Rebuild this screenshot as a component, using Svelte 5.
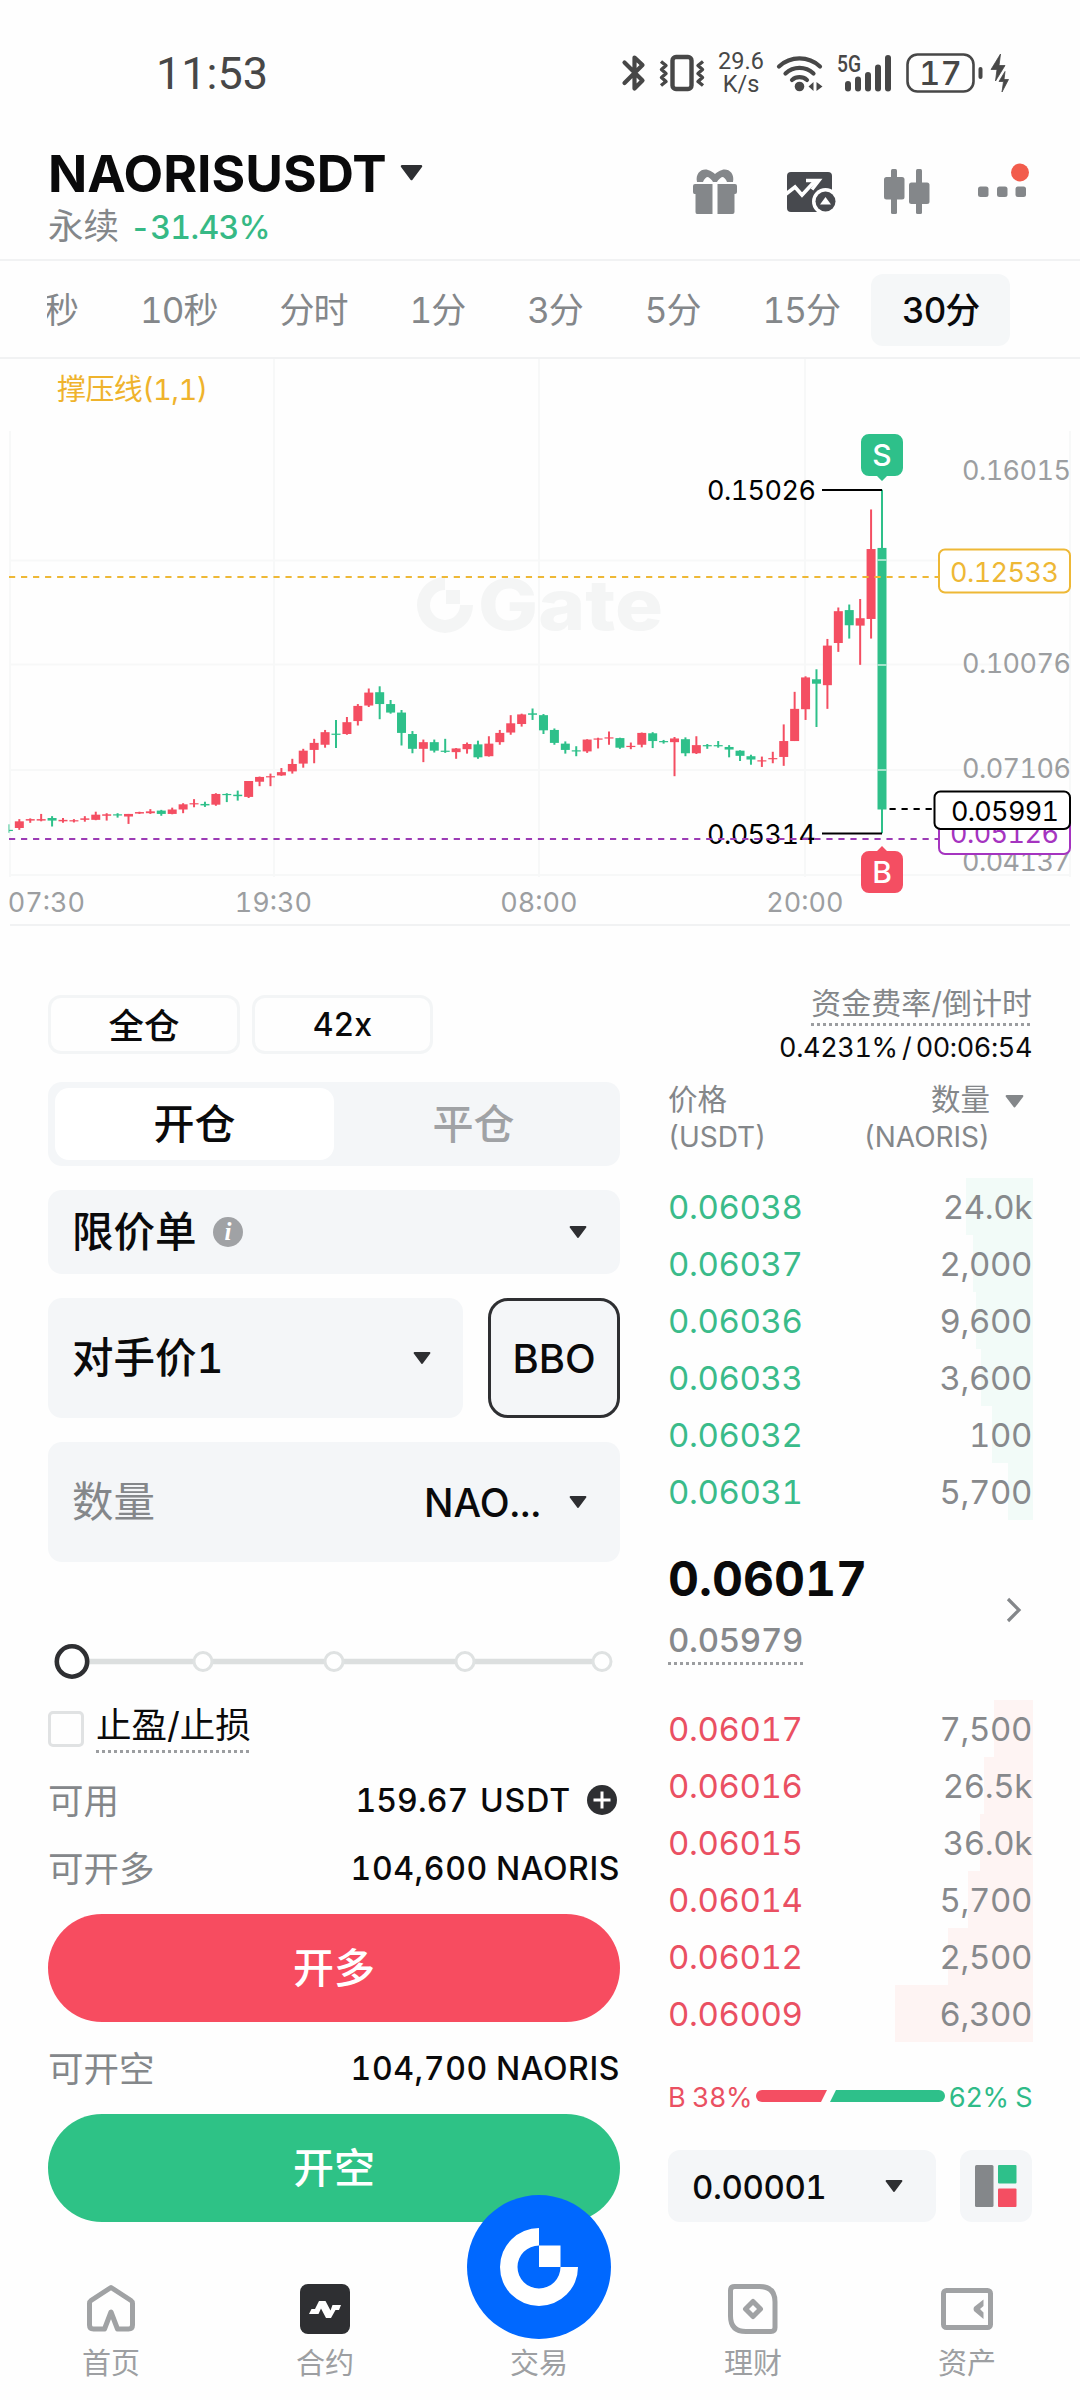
<script>
    const intervals = ['秒', '10秒', '分时', '1分', '3分', '5分', '15分', '30分'];
    let activeInterval = '30分';
    let side = 'open';
    let tpsl = false;

    // [direction, high, body top, body bottom, low] in chart units
    const candles = [
        ['g', 1282, 1297, 1300, 1305], ['r', 1268, 1274, 1292, 1297], ['r', 1266, 1268, 1272, 1278],
        ['r', 1254, 1268, 1272, 1274], ['g', 1260, 1265, 1272, 1288], ['r', 1265, 1270, 1274, 1278],
        ['r', 1268, 1271, 1273, 1277], ['r', 1260, 1266, 1270, 1275], ['r', 1248, 1256, 1270, 1271],
        ['r', 1252, 1255, 1259, 1272], ['g', 1252, 1255, 1257, 1264], ['r', 1254, 1254, 1261, 1281],
        ['r', 1248, 1249, 1253, 1254], ['r', 1241, 1247, 1252, 1254], ['g', 1243, 1245, 1254, 1259],
        ['r', 1237, 1242, 1254, 1255], ['r', 1225, 1228, 1242, 1252], ['r', 1214, 1225, 1227, 1236],
        ['g', 1221, 1227, 1231, 1235], ['r', 1198, 1200, 1229, 1232], ['g', 1198, 1200, 1203, 1222],
        ['g', 1191, 1202, 1206, 1218], ['r', 1165, 1165, 1208, 1211], ['r', 1153, 1154, 1167, 1179],
        ['r', 1145, 1152, 1154, 1179], ['r', 1130, 1141, 1150, 1151], ['r', 1105, 1119, 1139, 1145],
        ['r', 1078, 1083, 1118, 1129], ['r', 1051, 1062, 1081, 1117], ['r', 1027, 1033, 1067, 1075],
        ['g', 1000, 1037, 1040, 1076], ['r', 992, 1006, 1038, 1040], ['r', 957, 962, 1003, 1015],
        ['r', 915, 926, 961, 965], ['g', 909, 925, 957, 998], ['g', 946, 957, 980, 983],
        ['g', 973, 980, 1035, 1069], ['g', 1030, 1038, 1078, 1090], ['r', 1053, 1060, 1078, 1114],
        ['g', 1053, 1060, 1083, 1088], ['g', 1051, 1083, 1086, 1089], ['r', 1076, 1077, 1087, 1105],
        ['r', 1061, 1065, 1079, 1091], ['g', 1056, 1066, 1101, 1105], ['r', 1044, 1064, 1098, 1099],
        ['r', 1027, 1035, 1060, 1067], ['r', 987, 1009, 1034, 1040], ['r', 983, 985, 1011, 1018],
        ['g', 969, 982, 986, 1000], ['g', 984, 987, 1028, 1038], ['g', 1023, 1027, 1062, 1067],
        ['g', 1058, 1064, 1081, 1091], ['g', 1071, 1082, 1085, 1098], ['r', 1052, 1053, 1085, 1089],
        ['r', 1048, 1050, 1053, 1077], ['r', 1031, 1047, 1050, 1067], ['g', 1048, 1049, 1075, 1078],
        ['r', 1061, 1070, 1073, 1079], ['r', 1034, 1035, 1067, 1074], ['g', 1033, 1036, 1057, 1076],
        ['g', 1054, 1057, 1059, 1064], ['r', 1046, 1050, 1060, 1152], ['g', 1047, 1052, 1090, 1098],
        ['r', 1044, 1068, 1090, 1092], ['g', 1065, 1068, 1071, 1078], ['g', 1057, 1068, 1071, 1075],
        ['g', 1068, 1073, 1080, 1101], ['g', 1082, 1083, 1097, 1111], ['g', 1094, 1098, 1107, 1121],
        ['r', 1099, 1109, 1111, 1127], ['r', 1086, 1103, 1106, 1117], ['r', 1012, 1057, 1100, 1124],
        ['r', 924, 970, 1057, 1057], ['r', 882, 885, 971, 1000], ['g', 863, 890, 902, 1019],
        ['r', 781, 799, 906, 970], ['r', 696, 706, 792, 816], ['g', 688, 703, 744, 780],
        ['r', 673, 725, 745, 851], ['r', 431, 538, 727, 780], ['g', 378, 535, 1242, 1306],
    ];
    const colors = { r: '#f44e62', g: '#2ec08a' };
    const cx = (i) => 8.4 + i * 10.92;
    const cy = (v) => v / 2.703 - 9;

    const gridX = [10, 274, 539, 805, 1070];
    const gridY = [201.5, 305.5, 411, 516];
    const axis = [['0.16015', 121], ['0.10076', 314], ['0.07106', 419], ['0.04137', 512]];
    const times = [['07:30', 46.5], ['19:30', 273.5], ['08:00', 539], ['20:00', 805]];

    const asks = [
        { price: '0.06038', amount: '24.0k', depth: 67 },
        { price: '0.06037', amount: '2,000', depth: 60 },
        { price: '0.06036', amount: '9,600', depth: 57 },
        { price: '0.06033', amount: '3,600', depth: 52 },
        { price: '0.06032', amount: '100', depth: 41 },
        { price: '0.06031', amount: '5,700', depth: 25 },
    ];
    const bids = [
        { price: '0.06017', amount: '7,500', depth: 39 },
        { price: '0.06016', amount: '26.5k', depth: 49 },
        { price: '0.06015', amount: '36.0k', depth: 53 },
        { price: '0.06014', amount: '5,700', depth: 65 },
        { price: '0.06012', amount: '2,500', depth: 85 },
        { price: '0.06009', amount: '6,300', depth: 138 },
    ];
</script>

{#snippet caret(color = '#2e2f32', w = 18)}
    <svg class="caret" width={w} height={w * 0.66} viewBox="0 0 18 12">
        <path d="M1.500 1h15L9 11z" fill={color} stroke={color} stroke-width="2" stroke-linejoin="round" />
    </svg>
{/snippet}

{#snippet row(item, kind)}
    <div class="row {kind}">
        <span class="depth" style="width: {item.depth}px"></span>
        <span class="price">{item.price}</span>
        <span class="amount">{item.amount}</span>
    </div>
{/snippet}

<div class="screen">
    <div class="status">
        <span class="clock">11:53</span>
        <div class="status-icons">
            <svg width="24" height="38" viewBox="0 0 24 38" fill="none" stroke="#474747" stroke-width="4.200" stroke-linecap="round" stroke-linejoin="round">
                <path d="M2.500 8.500 20.500 26.500 12.500 34.500V3.500l8 7.500L2.500 29" />
            </svg>
            <svg class="vibrate" width="46" height="38" viewBox="0 0 46 38" fill="none" stroke="#474747" stroke-linejoin="round">
                <rect x="13.500" y="3" width="19" height="32" rx="3.500" stroke-width="4.400" />
                <path d="M2 7.500l5 4-4.500 4 4.500 4-4.500 4 4.500 4-5 4M44 7.500l-5 4 4.500 4-4.500 4 4.500 4-4.500 4 5 4" stroke-width="3.400" />
            </svg>
            <span class="speed"><span>29.6</span><span>K/s</span></span>
            <svg class="wifi" width="48" height="38" viewBox="0 0 48 38">
                <g fill="none" stroke="#474747" stroke-width="4.200" stroke-linecap="round">
                    <path d="M3 12.500a30 30 0 0 1 41 0" />
                    <path d="M9.500 19.500a20.500 20.500 0 0 1 28 0" />
                    <path d="M16 26a11.500 11.500 0 0 1 15 0" />
                </g>
                <circle cx="23.500" cy="32.500" r="4.800" fill="#474747" />
                <path d="M37.500 28v9l-5-4.500zM40.500 28v9l6-4.500z" fill="#474747" />
            </svg>
            <svg class="signal" width="56" height="38" viewBox="0 0 56 38" fill="#474747">
                <text x="0" y="18" class="net" textLength="24" lengthAdjust="spacingAndGlyphs">5G</text>
                <rect x="8" y="27" width="6" height="10.500" rx="3" />
                <rect x="18" y="22.500" width="6" height="15" rx="3" />
                <rect x="28" y="18" width="6" height="19.500" rx="3" />
                <rect x="38" y="10.500" width="6" height="27" rx="3" />
                <rect x="48" y="1" width="6" height="36.500" rx="3" />
            </svg>
            <svg class="battery" width="78" height="40" viewBox="0 0 78 40" fill="#474747">
                <rect x="1.500" y="1.500" width="66" height="37" rx="10" fill="none" stroke="#474747" stroke-width="2.600" />
                <rect x="72.500" y="14" width="4" height="12" rx="2" />
                <text x="34.500" y="32" text-anchor="middle" class="level">17</text>
            </svg>
            <svg class="bolt" width="18" height="40" viewBox="0 0 18 40" fill="#474747">
                <path d="M9.500 1 0 16.500h6L4.500 28 14 12.500H8zM14 18.500 8 28.500h4.500L11 39l6.500-12.500h-4.500z" stroke="#474747" stroke-width="0.800" />
            </svg>
        </div>
    </div>

    <header>
        <div class="pair">
            <div class="symbol"><h1>NAORISUSDT</h1>{@render caret('#2e2f32', 23)}</div>
            <div class="change"><span class="kind">永续</span><span class="pct">-31.43%</span></div>
        </div>
        <div class="tools">
            <svg width="46" height="46" viewBox="0 0 46 46">
                <path d="M5 13C3 4 10-1 16 1c3 1 5 2 7 4 2-2 4-3 7-4 6-2 13 3 11 12h-6c-1-3-3-5-5-5-2 1-4 3-5 5h-4c-1-2-3-4-5-5-2 0-4 2-5 5z" fill="#84878a" />
                <path d="M3 15h17.500v30H5q-1.500 0-1.500-2V25H2.500Q1 25 1 23v-6q0-2 2-2zM25.500 15H43q2 0 2 2v6q0 2-2 2h-.5v18q0 2-2 2h-15z" fill="#84878a" />
            </svg>
            <svg width="50" height="44" viewBox="0 0 50 44">
                <rect x="1" y="2" width="45" height="40" rx="4" fill="#47494e" />
                <path d="M0 24l9-7 7 8 13-14" fill="none" stroke="#fff" stroke-width="3.600" />
                <path d="M20 10.500h13l-7 9" fill="none" stroke="#fff" stroke-width="3.400" />
                <circle cx="39.500" cy="31.500" r="13.500" fill="#fff" />
                <circle cx="39.500" cy="31.500" r="10" fill="#47494e" />
                <path d="M39.500 27l5.500 7.500H34z" fill="#fff" />
            </svg>
            <svg width="46" height="46" viewBox="0 0 46 46" fill="#84878a">
                <rect x="7" y="0" width="6" height="45" rx="1.500" />
                <rect x="0" y="8" width="20.500" height="22.500" rx="2.500" />
                <rect x="32" y="0" width="6" height="45" rx="1.500" />
                <rect x="25" y="13.500" width="20.500" height="21.500" rx="2.500" />
            </svg>
            <svg width="52" height="46" viewBox="0 0 52 46">
                <rect x="0" y="17.500" width="10.500" height="10.500" rx="2.500" fill="#84878a" />
                <rect x="19" y="17.500" width="10.500" height="10.500" rx="2.500" fill="#84878a" />
                <rect x="37.500" y="17.500" width="10.500" height="10.500" rx="2.500" fill="#84878a" />
                <circle cx="42" cy="3.500" r="9" fill="#f25c4c" />
            </svg>
        </div>
    </header>

    <nav class="intervals">
        {#each intervals as label}
            <button class:active={label === activeInterval} on:click={() => (activeInterval = label)}>{label}</button>
        {/each}
    </nav>

    <svg class="chart" width="1080" height="567" viewBox="0 0 1080 567">
        {#each gridX as x, i}
            <line x1={x} x2={x} y1={i === 0 || i === 4 ? 72 : 0} y2="518" class="grid" />
        {/each}
        {#each gridY as y}
            <line x1="10" x2="1070" y1={y} y2={y} class="grid" />
        {/each}
        <line x1="10" x2="1070" y1="566" y2="566" stroke="#f1f2f3" stroke-width="2" />

        <g fill="#f4f5f5">
            <path d="M445 218a28 28 0 1 0 28 28h-13a15 15 0 1 1-15-15z" />
            <rect x="446" y="231" width="14" height="14" />
            <text x="478" y="271" class="watermark" textLength="185" lengthAdjust="spacingAndGlyphs">Gate</text>
        </g>
        <text x="57" y="41" class="indicator" textLength="151">撑压线(1,1)</text>

        {#each axis as [label, y]}
            <text x="962" {y} textLength="109" class="label muted">{label}</text>
        {/each}
        {#each times as [label, x]}
            <text {x} y="553" text-anchor="middle" class="label muted">{label}</text>
        {/each}
        <text x="707" y="140.500" textLength="109" class="label">0.15026</text>
        <text x="707" y="485" textLength="109" class="label">0.05314</text>

        {#each candles as [dir, high, top, bottom, low], i}
            <line x1={cx(i)} x2={cx(i)} y1={cy(high)} y2={cy(low)} stroke={colors[dir]} stroke-width="2" />
            <rect x={cx(i) - 4.5} y={cy(top)} width="9" height={Math.max(1.2, cy(bottom) - cy(top))} fill={colors[dir]} />
        {/each}
        <path d="M877.500 201h9M877.500 306h9M877.500 411h9" stroke="#c9eee0" stroke-width="1.500" />
        <rect x="0" y="464" width="8.500" height="12" fill="#fefefe" />

        <path d="M822 131h60M822 474.500h60" stroke="#000" stroke-width="2" />
        <line x1="9" x2="938" y1="218" y2="218" stroke="#eeb836" stroke-width="2" stroke-dasharray="6.200 5.820" />
        <line x1="9" x2="938" y1="480" y2="480" stroke="#9c3bb5" stroke-width="2" stroke-dasharray="6.200 5.820" />
        <line x1="889.500" x2="933" y1="450" y2="450" stroke="#000" stroke-width="2" stroke-dasharray="6.200 5.820" />

        <rect x="939" y="190.500" width="131" height="43" rx="6" fill="#fff" stroke="#eeb836" stroke-width="2" />
        <text x="950" y="222.500" textLength="109" class="label" fill="#eeb836">0.12533</text>
        <rect x="939" y="452" width="131" height="43" rx="6" fill="#fff" stroke="#a534c0" stroke-width="2" />
        <text x="950" y="484" textLength="109" class="label" fill="#a534c0">0.05126</text>
        <rect x="934.500" y="432.500" width="135.500" height="37.500" rx="6" fill="#fff" stroke="#000" stroke-width="2" />
        <text x="951" y="462" textLength="108" class="label">0.05991</text>

        <path d="M869 75h26a8 8 0 0 1 8 8v26a8 8 0 0 1-8 8h-8l-5 5-5-5h-8a8 8 0 0 1-8-8V83a8 8 0 0 1 8-8z" fill="#2ec08a" />
        <text x="882" y="106.500" text-anchor="middle" class="mark">S</text>
        <path d="M869 492h8l5-5 5 5h8a8 8 0 0 1 8 8v26a8 8 0 0 1-8 8h-26a8 8 0 0 1-8-8v-26a8 8 0 0 1 8-8z" fill="#f44e62" />
        <text x="882" y="523.500" text-anchor="middle" class="mark">B</text>
    </svg>

    <main>
        <section class="form">
            <div class="modes">
                <button class="margin">全仓</button>
                <button class="leverage">42x</button>
            </div>
            <div class="sides">
                <button class:on={side === 'open'} on:click={() => (side = 'open')}>开仓</button>
                <button class:on={side === 'close'} on:click={() => (side = 'close')}>平仓</button>
            </div>
            <div class="field order">
                <span class="name">限价单</span>
                <svg class="info" width="30" height="30" viewBox="0 0 30 30">
                    <circle cx="15" cy="15" r="15" fill="#a0a2a5" />
                    <text x="15" y="23" text-anchor="middle" class="i">i</text>
                </svg>
                {@render caret()}
            </div>
            <div class="price-row">
                <div class="field"><span class="name">对手价1</span>{@render caret()}</div>
                <button class="bbo">BBO</button>
            </div>
            <div class="field qty">
                <span class="name hint">数量</span>
                <span class="unit">NAO...</span>
                {@render caret()}
            </div>

            <svg class="slider" width="572" height="36" viewBox="0 0 572 36" fill="#fff">
                <line x1="40" x2="548" y1="17.500" y2="17.500" stroke="#dcdfdf" stroke-width="5.500" />
                {#each [155, 286, 417, 554] as x}
                    <circle cx={x} cy="17.500" r="9" stroke="#dfe2e2" stroke-width="3" />
                {/each}
                <circle cx="24" cy="17.500" r="15.200" stroke="#2e2f32" stroke-width="4.600" />
            </svg>

            <label class="tpsl">
                <input type="checkbox" bind:checked={tpsl} />
                <span class="dotted">止盈/止损</span>
            </label>

            <div class="info-row">
                <span>可用</span>
                <b class="avail">159.67 <i>USDT</i></b>
                <svg class="plus" width="30" height="30" viewBox="0 0 30 30">
                    <circle cx="15" cy="15" r="15" fill="#2e2f32" />
                    <path d="M15 6.500v17M6.500 15h17" stroke="#fff" stroke-width="3" />
                </svg>
            </div>
            <div class="info-row"><span>可开多</span><b>104,600 <i>NAORIS</i></b></div>
            <button class="submit long">开多</button>
            <div class="info-row"><span>可开空</span><b>104,700 <i>NAORIS</i></b></div>
            <button class="submit short">开空</button>
        </section>

        <section class="book">
            <div class="funding">
                <span class="dotted">资金费率/倒计时</span>
                <span class="rate">0.4231% / 00:06:54</span>
            </div>
            <div class="head">
                <div>价格<small>(USDT)</small></div>
                <div class="right">数量<small>(NAORIS)</small></div>
                {@render caret('#84878a', 19)}
            </div>
            <div class="rows">
                {#each asks as item}{@render row(item, 'ask')}{/each}
            </div>
            <div class="mid">
                <div>
                    <div class="last">0.06017</div>
                    <span class="index dotted">0.05979</span>
                </div>
                <svg width="16" height="26" viewBox="0 0 16 26" fill="none" stroke="#84878a" stroke-width="3.200">
                    <path d="M2 2l11 11L2 24" />
                </svg>
            </div>
            <div class="rows">
                {#each bids as item}{@render row(item, 'bid')}{/each}
            </div>
            <div class="ratio">
                <span class="buy">B 38%</span>
                <svg width="189" height="12" viewBox="0 0 189 12">
                    <path d="M6 0h65l-6 12H6A6 6 0 0 1 6 0z" fill="#f44e62" />
                    <path d="M80 0h103a6 6 0 0 1 0 12H74z" fill="#2ec08a" />
                </svg>
                <span class="sell">62% S</span>
            </div>
            <div class="foot">
                <div class="step"><span>0.00001</span>{@render caret()}</div>
                <div class="layout">
                    <svg width="42" height="42" viewBox="0 0 42 42">
                        <rect x="0" y="0" width="18.500" height="42" rx="1.500" fill="#84878a" />
                        <rect x="23" y="0" width="18.500" height="18.500" rx="1" fill="#2ec08a" />
                        <rect x="23" y="23.500" width="18.500" height="18.500" rx="1" fill="#f44e62" />
                    </svg>
                </div>
            </div>
        </section>
    </main>

    <nav class="tabbar">
        <div class="tab">
            <svg width="52" height="52" viewBox="0 0 52 52" fill="none" stroke="#a0a2a4" stroke-width="5" stroke-linejoin="round">
                <path d="M19.500 46H8.500Q4.500 46 4.500 42V20.500Q4.500 18.500 6 17.500L26 4.500l20 13q1.500 1 1.500 3V42q0 4-4 4H32.500L26 29z" />
            </svg>
            <span>首页</span>
        </div>
        <div class="tab">
            <svg width="52" height="52" viewBox="0 0 52 52">
                <rect x="1" y="1" width="50" height="50" rx="8" fill="#2e2f32" />
                <path d="M10 31l2.500-5h3.500l4-8h6.500l5 9.500 2-5.500H42l-2 5h-3.500L32 35h-5l-5-9.500-2.500 5.500z" fill="#fff" />
            </svg>
            <span>合约</span>
        </div>
        <div class="tab">
            <svg class="fab" width="144" height="144" viewBox="0 0 144 144">
                <circle cx="72" cy="72" r="72" fill="#0068ff" />
                <path d="M72 33a39 39 0 1 0 39 39H93.500A21.500 21.500 0 1 1 72 50.500z" fill="#fff" />
                <rect x="72" y="50.500" width="21.500" height="21.500" fill="#fff" />
            </svg>
            <span>交易</span>
        </div>
        <div class="tab">
            <svg width="52" height="52" viewBox="0 0 52 52" fill="none" stroke="#a0a2a4" stroke-width="5">
                <path d="M7.500 3.500H32.500Q48 3.500 48 19V44.500Q48 48.500 44 48.500H19Q3.500 48.500 3.500 33V7.500Q3.500 3.500 7.500 3.500z" />
                <path d="M26 18.500l7.500 7.500-7.500 7.500-7.500-7.500z" stroke-linejoin="round" />
            </svg>
            <span>理财</span>
        </div>
        <div class="tab">
            <svg width="54" height="52" viewBox="0 0 54 52" fill="none" stroke="#a0a2a4" stroke-width="5">
                <rect x="3.500" y="7.500" width="47" height="37" rx="3" />
                <path d="M43.500 16.500v6.500L40 26l3.500 3.500v6.500L34 28q-1-2 0-4z" fill="#a0a2a4" stroke="none" />
            </svg>
            <span>资产</span>
        </div>
    </nav>
</div>

<style>
    :global(body) {
        margin: 0;
        background: #fefefe;
    }

    .screen {
        width: 1080px;
        height: 2400px;
        overflow: hidden;
        background: #fefefe;
        color: #0a0a0b;
        font-family: Inter, 'Noto Sans CJK SC', sans-serif;
        font-variant-numeric: tabular-nums;
        display: flex;
        flex-direction: column;
    }

    .screen * {
        box-sizing: border-box;
    }

    svg {
        display: block;
        flex: none;
        overflow: visible;
    }

    button {
        border: 0;
        padding: 0;
        background: none;
        color: inherit;
        font: inherit;
        font-variant-numeric: tabular-nums;
    }

    .status {
        height: 130px;
        padding: 16px 71px 0 156px;
        display: flex;
        align-items: center;
        justify-content: space-between;
        color: #474747;
        font-family: Roboto, sans-serif;
    }

    .clock {
        font-size: 45px;
    }

    .status-icons {
        display: flex;
        align-items: center;
    }

    .vibrate {
        margin-left: 13px;
    }

    .speed {
        width: 46px;
        margin: 0 12px 0 13px;
        display: flex;
        flex-direction: column;
        align-items: center;
        font-size: 23.5px;
        line-height: 23px;
    }

    .signal {
        margin-left: 13px;
    }

    .net {
        font-size: 23px;
        font-weight: 500;
    }

    .battery {
        margin-left: 13px;
    }

    .level {
        font-family: Inter, sans-serif;
        font-size: 33px;
        font-weight: 500;
    }

    .bolt {
        margin-left: 7px;
    }

    header {
        height: 131px;
        padding: 16px 50px 0 48px;
        border-bottom: 2px solid #f1f2f3;
        display: flex;
        justify-content: space-between;
    }

    .symbol {
        height: 54px;
        display: flex;
        align-items: center;
        gap: 13px;
    }

    h1 {
        margin: 0;
        font-size: 51.5px;
        font-weight: 700;
        line-height: 53px;
    }

    .change {
        height: 54px;
        line-height: 54px;
        font-size: 32px;
        display: flex;
        gap: 11px;
    }

    .kind {
        font-size: 35.5px;
        color: #84878a;
    }

    .pct {
        color: #36b985;
        font-weight: 500;
        letter-spacing: -0.6px;
        padding-top: 1px;
    }

    .tools {
        height: 92px;
        display: flex;
        align-items: center;
        gap: 48px;
    }

    .intervals {
        height: 98px;
        margin-left: 47px;
        overflow: hidden;
        display: flex;
        align-items: center;
    }

    .intervals button {
        height: 72px;
        flex: none;
        padding: 0 31px 5px;
        font-size: 35px;
        letter-spacing: -1px;
        color: #84878a;
    }

    .intervals button:first-child {
        margin-left: -3px;
        padding-left: 0;
    }

    .intervals button.active {
        border-radius: 12px;
        background: #f5f7f8;
        color: #0a0a0b;
        font-weight: 500;
    }

    .chart {
        box-shadow: 0 -2px 0 #f1f2f3;
    }

    .grid {
        stroke: #f7f8f8;
        stroke-width: 2;
    }

    .label {
        font-size: 27px;
    }

    .muted {
        fill: #9c9ea1;
    }

    .indicator {
        font-size: 29px;
        fill: #efb32c;
    }

    .watermark {
        font-size: 70px;
        font-weight: 800;
    }

    .mark {
        font-size: 30px;
        font-weight: 500;
        fill: #fff;
    }

    main {
        height: 1314px;
        padding: 69px 48px 0;
        display: grid;
        grid-template-columns: 572px 364px;
        column-gap: 48px;
    }

    .form {
        display: flex;
        flex-direction: column;
    }

    .modes {
        display: flex;
        gap: 12px;
        margin-bottom: 28px;
    }

    .modes button {
        height: 59px;
        border: 3px solid #f3f5f6;
        border-radius: 13px;
        font-weight: 500;
        font-size: 32px;
    }

    .modes .margin {
        width: 192px;
        padding-bottom: 3px;
        font-size: 35.5px;
    }

    .modes .leverage {
        width: 181px;
    }

    .sides {
        height: 84px;
        margin-bottom: 24px;
        padding: 6px 7px;
        border-radius: 14px;
        background: #f4f6f8;
        display: grid;
        grid-template-columns: 1fr 1fr;
    }

    .sides button {
        padding-bottom: 6px;
        border-radius: 14px;
        font-size: 41px;
        font-weight: 500;
        color: #a0a2a5;
    }

    .sides .on {
        background: #fff;
        color: #0a0a0b;
    }

    .field {
        padding: 0 33px 0 24px;
        border-radius: 14px;
        background: #f4f6f8;
        display: flex;
        align-items: center;
        font-size: 39px;
    }

    .name {
        padding-bottom: 6px;
        font-size: 41.5px;
        font-weight: 500;
    }

    .field .caret {
        margin-left: auto;
    }

    .order {
        height: 84px;
        margin-bottom: 24px;
    }

    .info {
        margin-left: 16px;
    }

    .i {
        font: italic bold 25px 'Liberation Serif', serif;
        fill: #fff;
    }

    .price-row {
        height: 120px;
        margin-bottom: 24px;
        display: grid;
        grid-template-columns: 415px 132px;
        justify-content: space-between;
    }

    .price-row .field {
        padding-right: 32px;
    }

    .bbo {
        border: 3px solid #2e2f32;
        border-radius: 20px;
        background: #f4f6f8;
        font-size: 40px;
        font-weight: 500;
    }

    .qty {
        height: 120px;
    }

    .hint {
        color: #84878a;
        font-weight: 400;
    }

    .unit {
        margin-left: auto;
        font-size: 39px;
        font-weight: 500;
    }

    .qty .caret {
        margin-left: 28px;
    }

    .slider {
        margin: 82px 0 31px;
    }

    .tpsl {
        height: 36px;
        display: flex;
        align-items: center;
        gap: 12px;
        font-size: 35.5px;
    }

    .tpsl input {
        appearance: none;
        width: 36px;
        height: 36px;
        margin: 0;
        border: 3px solid #e0e2e3;
        border-radius: 5px;
    }

    .dotted {
        background: repeating-linear-gradient(90deg, #9b9da0 0 3px, transparent 3px 6px) left bottom / 100% 3px no-repeat;
    }

    .tpsl .dotted {
        height: 48px;
        line-height: 42px;
    }

    .info-row {
        height: 68px;
        display: flex;
        align-items: center;
    }

    .tpsl + .info-row {
        margin-top: 19px;
    }

    .info-row span {
        padding-bottom: 4px;
        font-size: 35.5px;
        color: #84878a;
    }

    .info-row b {
        margin-left: auto;
        font-size: 32px;
        font-weight: 500;
        letter-spacing: 0.6px;
        word-spacing: -1px;
    }

    .info-row i {
        font-style: normal;
    }

    .info-row .avail {
        letter-spacing: 0.1px;
    }

    .info-row .avail i {
        margin-left: 4px;
        letter-spacing: 0.9px;
    }

    .plus {
        margin: 0 3px 0 16px;
    }

    .submit {
        height: 108px;
        margin: 12px 0;
        padding-bottom: 6px;
        border-radius: 54px;
        color: #fff;
        font-size: 41px;
        font-weight: 500;
    }

    .long {
        background: #f74c60;
    }

    .short {
        background: #2ec286;
    }

    .funding {
        height: 86px;
        margin-top: -12px;
        display: flex;
        flex-direction: column;
        align-items: flex-end;
    }

    .funding .dotted {
        height: 43px;
        line-height: 40px;
        font-size: 30px;
        color: #84878a;
    }

    .rate {
        line-height: 43px;
        font-size: 27px;
        letter-spacing: -0.4px;
        word-spacing: -2.5px;
    }

    .head {
        height: 109px;
        padding-top: 12px;
        display: flex;
        font-size: 29.5px;
        line-height: 37px;
        color: #84878a;
    }

    .head small {
        display: block;
        padding-top: 1px;
        font-size: 28px;
    }

    .head .right {
        margin-left: auto;
        text-align: right;
    }

    .head .caret {
        margin: 14px 8px 0 15px;
    }

    .row {
        position: relative;
        height: 57px;
        line-height: 59px;
        display: flex;
        justify-content: space-between;
        font-size: 33px;
        letter-spacing: -0.4px;
    }

    .depth {
        position: absolute;
        top: 0;
        right: -1px;
        height: 100%;
    }

    .ask .depth {
        background: #f2fbf8;
    }

    .bid .depth {
        background: #fef4f3;
    }

    .ask .price {
        color: #3abb8a;
    }

    .bid .price {
        color: #ea5062;
    }

    .price,
    .amount {
        position: relative;
    }

    .amount {
        color: #87898c;
    }

    .mid {
        height: 180px;
        padding: 28px 10px 0 0;
        display: flex;
        justify-content: space-between;
    }

    .mid svg {
        margin-top: 49px;
    }

    .last {
        height: 62px;
        line-height: 62px;
        font-size: 48px;
        font-weight: 700;
    }

    .index {
        display: inline-block;
        height: 55px;
        line-height: 60px;
        font-size: 33px;
        font-weight: 500;
        letter-spacing: -0.3px;
        color: #87898c;
    }

    .ratio {
        height: 108px;
        display: flex;
        align-items: center;
        justify-content: space-between;
        font-size: 27px;
        letter-spacing: -0.5px;
        white-space: nowrap;
    }

    .ratio span {
        padding-top: 2px;
    }

    .buy {
        color: #ea5062;
    }

    .sell {
        color: #2fbb88;
    }

    .foot {
        height: 72px;
        display: flex;
        justify-content: space-between;
    }

    .step {
        width: 268px;
        padding: 0 33px 0 24px;
        border-radius: 12px;
        background: #f4f6f8;
        display: flex;
        align-items: center;
        justify-content: space-between;
        font-size: 33px;
        font-weight: 500;
        letter-spacing: -0.4px;
    }

    .step span {
        padding-top: 2px;
    }

    .layout {
        width: 72px;
        border-radius: 12px;
        background: #f4f6f8;
        display: grid;
        place-items: center;
    }

    .tabbar {
        height: 160px;
        padding: 43px 6px 0 4px;
        display: grid;
        grid-template-columns: repeat(5, 1fr);
    }

    .tab {
        height: 103px;
        display: flex;
        flex-direction: column;
        align-items: center;
        justify-content: space-between;
        font-size: 29px;
        line-height: 44px;
        color: #9d9fa2;
    }

    .fab {
        margin-top: -88px;
    }
</style>
